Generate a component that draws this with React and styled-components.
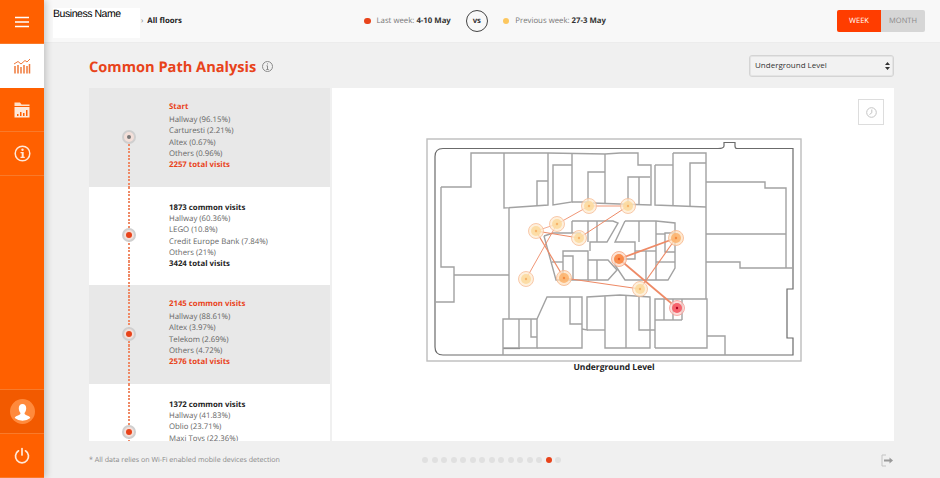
import React from 'react';
import styled, { createGlobalStyle } from 'styled-components';

const GlobalStyle = createGlobalStyle`
  html, body, #root { margin: 0; height: 100%; }
  body {
    font-family: "Open Sans", "Liberation Sans", sans-serif;
    text-rendering: geometricPrecision;
    background: #f0f0f0;
    overflow: hidden;
  }
`;

const Page = styled.div`
  display: flex;
  width: 940px;
  height: 478px;
  overflow: hidden;
`;

const Sidebar = styled.nav`
  width: 44px;
  flex: none;
  display: flex;
  flex-direction: column;
  background: #ff6000;
  box-shadow: 2px 0 7px rgba(0, 0, 0, 0.2);
  position: relative;
  z-index: 2;
`;

const SideItem = styled.div`
  height: 44px;
  display: flex;
  align-items: center;
  justify-content: center;
  box-sizing: border-box;
  border-bottom: 1px solid ${p => (p.$active ? '#fff' : '#f97a2a')};
  background: ${p => (p.$active ? '#fff' : p.$dark ? '#f25a00' : 'transparent')};
`;

const SideSpacer = styled.div`
  flex: 1;
  border-bottom: 1px solid #f97a2a;
`;

const Column = styled.div`
  flex: 1;
  min-width: 0;
  display: flex;
  flex-direction: column;
`;

const Header = styled.header`
  height: 43px;
  flex: none;
  display: flex;
  align-items: center;
  background: #f8f8f8;
  border-bottom: 1px solid #ececec;
  box-sizing: border-box;
  padding: 0 15px 0 9px;
`;

const BusinessName = styled.div`
  width: 87px;
  height: 30px;
  flex: none;
  align-self: flex-start;
  margin-top: 8px;
  background: #fff;
  font-family: "Liberation Sans", sans-serif;
  font-size: 10.5px;
  line-height: 13px;
  letter-spacing: -0.45px;
  color: #000;
`;

const Crumb = styled.div`
  margin-left: 1px;
  font-size: 7.8px;
  font-weight: 700;
  color: #222;
  white-space: nowrap;
  width: 223px;
  flex: none;

  span {
    font-weight: 400;
    color: #777;
    margin-right: 4px;
  }
`;

const Compare = styled.div`
  display: flex;
  align-items: center;
  font-size: 7.8px;
  color: #777;
  white-space: nowrap;
  flex: 1;

  b {
    color: #333;
  }
`;

const LegendDot = styled.i`
  width: 6.5px;
  height: 6.5px;
  border-radius: 50%;
  background: ${p => p.$color};
  margin-right: 6px;
`;

const Vs = styled.div`
  width: 22px;
  height: 22px;
  box-sizing: border-box;
  border: 1px solid #444;
  border-radius: 50%;
  display: flex;
  align-items: center;
  justify-content: center;
  font-weight: 700;
  color: #333;
  margin: 0 15px;
`;

const Toggle = styled.div`
  display: flex;
  height: 22px;
  border-radius: 2px;
  overflow: hidden;
`;

const ToggleButton = styled.div`
  width: 44px;
  display: flex;
  align-items: center;
  justify-content: center;
  font-size: 7.5px;
  background: ${p => (p.$active ? '#ff3d00' : '#d6d6d6')};
  color: ${p => (p.$active ? '#fff' : '#8a8a8a')};
`;

const Main = styled.main`
  flex: 1;
  min-height: 0;
  display: flex;
  flex-direction: column;
  padding: 0 46px 0 45px;
`;

const TitleRow = styled.div`
  height: 45px;
  flex: none;
  display: flex;
  align-items: center;
  justify-content: space-between;
`;

const Title = styled.h1`
  margin: 0;
  padding-top: 2px;
  display: flex;
  align-items: center;
  gap: 6px;
  font-size: 14.6px;
  font-weight: 700;
  color: #e8431a;
`;

const SelectWrap = styled.div`
  position: relative;
  width: 145px;
  height: 22px;
  align-self: flex-start;
  margin-top: 12px;

  svg {
    position: absolute;
    right: 4px;
    top: 7px;
  }
`;

const LevelSelect = styled.select`
  display: block;
  appearance: none;
  width: 100%;
  height: 100%;
  box-sizing: border-box;
  border: 1px solid #d4d4d4;
  border-radius: 3px;
  background: #f2f2f2;
  box-shadow: inset 0 0 0 1px #e4e4e4;
  padding: 0 5px 3px;
  font-family: inherit;
  font-size: 8px;
  color: #333;
`;

const Panel = styled.section`
  flex: none;
  height: 353px;
  display: flex;
  gap: 2px;
  overflow: hidden;
`;

const PathList = styled.div`
  width: 241px;
  flex: none;
  overflow: hidden;
  background: #fff;
`;

const PathItem = styled.div`
  height: 98.5px;
  display: flex;
  align-items: center;
  background: ${p => (p.$shaded ? '#e8e8e8' : '#fff')};
`;

const Rail = styled.div`
  width: 80px;
  height: 100%;
  flex: none;
  position: relative;
  display: flex;
  align-items: center;
  justify-content: center;

  &::before {
    content: '';
    position: absolute;
    left: 39.25px;
    top: ${p => (p.$first ? '50%' : '0')};
    bottom: 0;
    width: 1.5px;
    background: repeating-linear-gradient(to bottom, #ef8a66 0 2px, transparent 2px 3.5px);
  }
`;

const Marker = styled.div`
  position: relative;
  width: 14px;
  height: 14px;
  margin-bottom: 1px;
  box-sizing: border-box;
  border-radius: 50%;
  border: 2px solid #cfcfcf;
  background: #f3dfd9;
  display: flex;
  align-items: center;
  justify-content: center;

  &::after {
    content: '';
    width: ${p => (p.$first ? '4px' : '6px')};
    height: ${p => (p.$first ? '4px' : '6px')};
    border-radius: 50%;
    background: ${p => (p.$first ? '#777' : '#e8431a')};
  }
`;

const Stats = styled.div`
  align-self: flex-start;
  padding-top: ${p => (p.$shaded ? '14.3px' : '16.2px')};
  font-size: 7.8px;
  line-height: 11.3px;
  color: #666;
  white-space: nowrap;
`;

const StatHead = styled.div`
  font-weight: 700;
  color: ${p => (p.$accent ? '#e8431a' : '#222')};
  margin-bottom: ${p => (p.$gap ? '1.4px' : '0')};
`;

const MapPanel = styled.div`
  flex: 1;
  position: relative;
  background: #fff;
  display: flex;
  flex-direction: column;
  align-items: center;
  padding: 50px 0 0 2px;
  box-sizing: border-box;
`;

const ClockButton = styled.div`
  position: absolute;
  top: 11px;
  right: 10px;
  width: 26px;
  height: 26px;
  box-sizing: border-box;
  border: 1px solid #ddd;
  display: flex;
  align-items: center;
  justify-content: center;
`;

const MapCaption = styled.div`
  font-size: 8.5px;
  font-weight: 700;
  color: #222;
`;

const Footer = styled.footer`
  flex: 1;
  display: flex;
  align-items: center;
  font-size: 7.1px;
  color: #8a8a8a;
  padding-top: 1px;
`;

const Note = styled.div`
  width: 333px;
  flex: none;
`;

const Dots = styled.div`
  display: flex;
  gap: 3.5px;
  flex: 1;
`;

const Dot = styled.i`
  width: 6px;
  height: 6px;
  border-radius: 50%;
  background: ${p => (p.$active ? '#e8431a' : '#e0e0e0')};
`;

const WALLS = [
  '441,187 441,267 454,267 454,302 435,302',
  '441,187 471,187 471,153 504,153 548,153 605,154 620,153 638,153 638,165 651,165 651,205 620,204 593,203',
  '504,153 504,208 548,205 548,153',
  '537,206 537,181 548,181',
  '572,154 572,202 553,205 553,165 572,165',
  '572,202 588,202 588,172 605,172',
  '605,154 605,203',
  '628,205 628,177 650,177',
  '639,177 639,204',
  '655,165 673,165',
  '655,165 655,205 706,207',
  '673,153 673,206',
  '673,153 706,153 706,299',
  '690,207 690,163 706,163',
  '706,182 765,182 765,188 786,188 786,268',
  '706,234 786,234',
  '706,262 740,262 740,268 793,268',
  '454,275 509,275',
  '509,208 509,319',
  '503,355 503,319 537,319 537,348 503,348',
  '519,319 519,348',
  '531,319 531,337 537,337',
  '537,319 547,297 582,297 582,348 537,348',
  '570,297 570,324 582,324',
  '582,329 587,330 587,297 620,295 650,297 650,348 605,348 605,296',
  '587,330 605,330',
  '626,295 626,348',
  '639,296 639,330 655,330',
  '655,348 655,299 707,299 707,348 655,348',
  '655,320 682,320',
  '664,299 664,320',
  '673,299 673,320',
  '682,299 682,320',
  '707,336 725,336 725,355',
  '544,236 553,233 581,233',
  '544,236 556,280 588,280 588,251 563,251 563,280',
  '563,256 573,256 573,280',
  '552,262 563,262',
  '572,221 572,233',
  '572,221 613,221 618,223 607,242 590,242 590,251',
  '588,221 588,242',
  '597,221 597,242',
  '588,260 608,260 617,270 608,280 588,280',
  '597,260 597,280',
  '625,221 615,242 635,242 635,259 615,259 615,265 625,280 668,280 675,268 675,223 656,221 625,221',
  '656,221 656,280',
  '639,221 639,242',
  '646,251 646,280',
  '635,251 656,251',
  '656,234 665,234',
  '675,233 665,233 665,252 675,252',
  '656,262 675,262',
];

const ROUTES = [
  [557, 224, 526, 279, 0.9],
  [557, 224, 589, 206, 0.9],
  [536, 231, 557, 224, 0.7],
  [536, 231, 579, 238, 1],
  [536, 231, 564, 278, 1.2],
  [579, 238, 628, 206, 1],
  [589, 206, 628, 206, 0.9],
  [564, 278, 640, 289, 1.1],
  [619, 259, 676, 238, 1.8],
  [619, 259, 677, 308, 1.7],
  [676, 238, 640, 289, 1.1],
];

const NODES = [
  [589, 206, 'soft'],
  [628, 206, 'soft'],
  [557, 224, 'soft'],
  [536, 231, 'soft'],
  [579, 238, 'soft'],
  [526, 279, 'soft'],
  [564, 278, 'warm'],
  [676, 238, 'warm'],
  [619, 259, 'hot'],
  [640, 289, 'soft'],
  [677, 308, 'red'],
];

const NODE_COLORS = {
  soft: ['#fdebd0', '#f6bd98', '#fcd99c', '#f7b469'],
  warm: ['#fde0c0', '#f6b68c', '#fbb26a', '#f48a3c'],
  hot: ['#fcd8c4', '#f4a582', '#f9813a', '#ea5a20'],
  red: ['#fbd0cc', '#f29a94', '#f4505a', '#b00020'],
};

const FloorMap = () => (
  <svg width="376" height="224" viewBox="426 138 376 224">
    <rect x="427" y="139" width="374" height="222" fill="none" stroke="#bdbdbd" strokeWidth="1.4" />
    <path
      d="M443 148.500H718Q724 148.500 724 146V142.500H735V146Q735 148.500 737 148.500H793V289H787V338H793V355H443Q435 355 435 347V156.500Q435 148.500 443 148.500Z"
      fill="none"
      stroke="#6b6b6b"
      strokeWidth="1.2"
    />
    <path d="M503 348.500H520" stroke="#6b6b6b" strokeWidth="1.2" />
    {WALLS.map(points => (
      <polyline key={points} points={points} fill="none" stroke="#a2a2a2" strokeWidth="1.4" />
    ))}
    {ROUTES.map(([x1, y1, x2, y2, w]) => (
      <line key={`${x1}-${y1}-${x2}-${y2}`} x1={x1} y1={y1} x2={x2} y2={y2} stroke="#ee8a66" strokeWidth={w} />
    ))}
    {NODES.map(([cx, cy, kind]) => {
      const [halo, ring, core, center] = NODE_COLORS[kind];
      return (
        <g key={`${cx}-${cy}`}>
          <circle cx={cx} cy={cy} r="7.500" fill={halo} fillOpacity="0.75" stroke={ring} strokeWidth="0.8" />
          <circle cx={cx} cy={cy} r="5" fill={core} fillOpacity="0.85" />
          <circle cx={cx} cy={cy} r="1.200" fill={center} />
        </g>
      );
    })}
  </svg>
);

const PATH_ITEMS = [
  {
    head: 'Start',
    rows: ['Hallway (96.15%)', 'Carturesti (2.21%)', 'Altex (0.67%)', 'Others (0.96%)'],
    total: '2257 total visits',
    shaded: true,
  },
  {
    head: '1873 common visits',
    rows: ['Hallway (60.36%)', 'LEGO (10.8%)', 'Credit Europe Bank (7.84%)', 'Others (21%)'],
    total: '3424 total visits',
  },
  {
    head: '2145 common visits',
    rows: ['Hallway (88.61%)', 'Altex (3.97%)', 'Telekom (2.69%)', 'Others (4.72%)'],
    total: '2576 total visits',
    shaded: true,
  },
  {
    head: '1372 common visits',
    rows: ['Hallway (41.83%)', 'Oblio (23.71%)', 'Maxi Toys (22.36%)'],
  },
];

const App = () => (
  <Page>
    <GlobalStyle />
    <Sidebar>
      <SideItem>
        <svg width="16" height="12" viewBox="0 0 16 12" fill="none" stroke="#fff" strokeWidth="1.500">
          <path d="M1 1.500H15M1 6H15M1 10.500H15" />
        </svg>
      </SideItem>
      <SideItem $active>
        <svg width="18" height="16" viewBox="0 0 18 16" fill="none" stroke="#f0793a">
          <path d="M1 6L5 3.500L8 6L12 2.500L14 4L17 1" strokeWidth="1" />
          <path d="M2 8V15.500M5 7V15.500M8 9V15.500M11 7V15.500M14 8V15.500M16.500 6V15.500" strokeWidth="1.500" />
        </svg>
      </SideItem>
      <SideItem>
        <svg width="16" height="16" viewBox="0 0 16 16">
          <path d="M0.500 0.500H6L7.500 2.500H15.500V4H0.500Z" fill="#ffe0c8" />
          <path
            d="M0.500 5H15.500V15.500H0.500ZM3 12V14H4.500V12ZM6 10V14H7.500V10ZM9 11V14H10.500V11ZM12 8V14H13.500V8Z"
            fill="#ffe8d8"
            fillRule="evenodd"
          />
        </svg>
      </SideItem>
      <SideItem>
        <svg width="17" height="17" viewBox="0 0 17 17">
          <circle cx="8.500" cy="8.500" r="7.300" fill="none" stroke="#ffe8d8" strokeWidth="1.500" />
          <circle cx="8.500" cy="4.800" r="1.200" fill="#ffe8d8" />
          <path d="M6.500 7H9.700V11.800H10.800V13H6.500V11.800H7.700V8.200H6.500Z" fill="#ffe8d8" />
        </svg>
      </SideItem>
      <SideSpacer />
      <SideItem $dark>
        <svg width="25" height="25" viewBox="0 0 25 25">
          <circle cx="12.500" cy="12.500" r="12.500" fill="#ff8a3c" />
          <path
            d="M12.500 5C15 5 16.300 7 16.200 9.500C16.100 11.500 15.300 13 14.500 14C14.500 15 15 15.500 16.500 16.200C18 16.800 20 17.300 20.300 19A12.500 12.500 0 0 1 4.700 19C5 17.300 7 16.800 8.500 16.200C10 15.500 10.500 15 10.500 14C9.700 13 8.900 11.500 8.800 9.500C8.700 7 10 5 12.500 5Z"
            fill="#fff"
          />
        </svg>
      </SideItem>
      <SideItem>
        <svg width="16" height="17" viewBox="0 0 16 17" fill="none" stroke="#ffe8d8" strokeWidth="1.700" strokeLinecap="round">
          <path d="M8 1.500V8" />
          <path d="M4.500 3.800A6.500 6.500 0 1 0 11.500 3.800" />
        </svg>
      </SideItem>
    </Sidebar>
    <Column>
      <Header>
        <BusinessName>Business Name</BusinessName>
        <Crumb>
          <span>›</span>All floors
        </Crumb>
        <Compare>
          <LegendDot $color="#e8431a" />
          Last week:&nbsp;<b>4-10 May</b>
          <Vs>vs</Vs>
          <LegendDot $color="#fcc75f" />
          Previous week:&nbsp;<b>27-3 May</b>
        </Compare>
        <Toggle>
          <ToggleButton $active>WEEK</ToggleButton>
          <ToggleButton>MONTH</ToggleButton>
        </Toggle>
      </Header>
      <Main>
        <TitleRow>
          <Title>
            Common Path Analysis
            <svg width="11" height="11" viewBox="0 0 11 11" fill="none" stroke="#8a8a8a">
              <circle cx="5.500" cy="5.500" r="5" />
              <path d="M5.500 4.800V8.500M4.300 8.500H6.700M4.500 4.800H5.500M5.500 2.400V3.400" />
            </svg>
          </Title>
          <SelectWrap>
            <LevelSelect defaultValue="Underground Level">
              <option>Underground Level</option>
            </LevelSelect>
            <svg width="5" height="8" viewBox="0 0 5 8" fill="#333">
              <path d="M2.500 0L5 3H0ZM2.500 8L0 5H5Z" />
            </svg>
          </SelectWrap>
        </TitleRow>
        <Panel>
          <PathList>
            {PATH_ITEMS.map((item, i) => (
              <PathItem key={item.head} $shaded={item.shaded}>
                <Rail $first={i === 0}>
                  <Marker $first={i === 0} />
                </Rail>
                <Stats $shaded={item.shaded}>
                  <StatHead $accent={item.shaded} $gap={item.shaded}>{item.head}</StatHead>
                  {item.rows.map(row => (
                    <div key={row}>{row}</div>
                  ))}
                  {item.total && <StatHead $accent={item.shaded}>{item.total}</StatHead>}
                </Stats>
              </PathItem>
            ))}
          </PathList>
          <MapPanel>
            <ClockButton>
              <svg width="11" height="11" viewBox="0 0 11 11" fill="none" stroke="#c4c4c4">
                <circle cx="5.500" cy="5.500" r="4.800" />
                <path d="M5.800 2.500V5.800L3.500 7.500" />
              </svg>
            </ClockButton>
            <FloorMap />
            <MapCaption>Underground Level</MapCaption>
          </MapPanel>
        </Panel>
        <Footer>
          <Note>* All data relies on Wi-Fi enabled mobile devices detection</Note>
          <Dots>
            {Array.from({ length: 15 }, (_, i) => (
              <Dot key={i} $active={i === 13} />
            ))}
          </Dots>
          <svg width="13" height="13" viewBox="0 0 13 13" fill="none">
            <path d="M5 1H1V12H5" stroke="#c4c4c4" />
            <path d="M3 6.500H9" stroke="#999" strokeWidth="2" />
            <path d="M8.500 3.500L12 6.500L8.500 9.500Z" fill="#999" />
          </svg>
        </Footer>
      </Main>
    </Column>
  </Page>
);

export default App;
